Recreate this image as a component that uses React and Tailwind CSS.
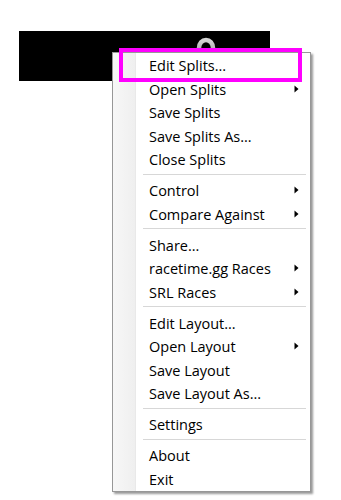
import React from "react";

const groups = [
  [
    { label: "Edit Splits..." },
    { label: "Open Splits", sub: true },
    { label: "Save Splits" },
    { label: "Save Splits As..." },
    { label: "Close Splits" },
  ],
  [
    { label: "Control", sub: true },
    { label: "Compare Against", sub: true },
  ],
  [
    { label: "Share..." },
    { label: "racetime.gg Races", sub: true },
    { label: "SRL Races", sub: true },
  ],
  [
    { label: "Edit Layout..." },
    { label: "Open Layout", sub: true },
    { label: "Save Layout" },
    { label: "Save Layout As..." },
  ],
  [{ label: "Settings" }],
  [{ label: "About" }, { label: "Exit" }],
];

function Arrow() {
  return (
    <svg width="5" height="8" viewBox="0 0 5 8" className="block">
      <path d="M0.5 0.5 L4.5 4 L0.5 7.5 Z" fill="#000" />
    </svg>
  );
}

function Row({ item }) {
  return (
    <div className="flex h-[23.5px] items-center pl-[36px] pr-[11px]">
      <span className="flex-1 whitespace-nowrap pt-[2px]">{item.label}</span>
      {item.sub && <Arrow />}
    </div>
  );
}

function Separator() {
  return (
    <div className="flex h-[7.5px] flex-col justify-center pl-[30px] pr-[4px]">
      <div className="h-px bg-[#d7d7d7]" />
      <div className="h-px bg-white" />
    </div>
  );
}

export default function App() {
  return (
    <div
      className="relative h-[500px] w-[341px] overflow-hidden bg-white"
      style={{ fontFamily: '"Open Sans", "Noto Sans", sans-serif' }}
    >
      <div className="ml-[19px] mt-[31px] relative h-[50px] w-[251px] bg-black">
        <svg
          className="absolute left-[176px] top-[6px]"
          width="22"
          height="22"
          viewBox="0 0 22 22"
        >
          <defs>
            <linearGradient id="rg" x1="0" y1="0" x2="0" y2="1">
              <stop offset="0" stopColor="#d4d4d4" />
              <stop offset="1" stopColor="#9a9a9a" />
            </linearGradient>
          </defs>
          <ellipse cx="11" cy="11" rx="7" ry="8" fill="none" stroke="url(#rg)" strokeWidth="4.5" />
        </svg>
      </div>

      <div className="absolute left-[112px] top-[52px] w-[199px] border border-[#979797] bg-white pb-[0.5px] pt-[0.5px] text-[14.5px] leading-none text-black shadow-[2px_2px_2px_rgba(0,0,0,0.4)]">
        <div className="absolute bottom-0 left-0 top-0 w-[23px] border-r border-[#e9e9e9] bg-gradient-to-r from-[#f7f7f7] to-[#efefef]" />
        <div className="relative">
          {groups.map((g, gi) => (
            <div key={gi}>
              {gi > 0 && <Separator />}
              {g.map((item) => (
                <Row key={item.label} item={item} />
              ))}
            </div>
          ))}
        </div>
      </div>

      <div className="absolute left-[119px] top-[48px] h-[34px] w-[183px] border-4 border-[#ff00ff]" />
    </div>
  );
}
